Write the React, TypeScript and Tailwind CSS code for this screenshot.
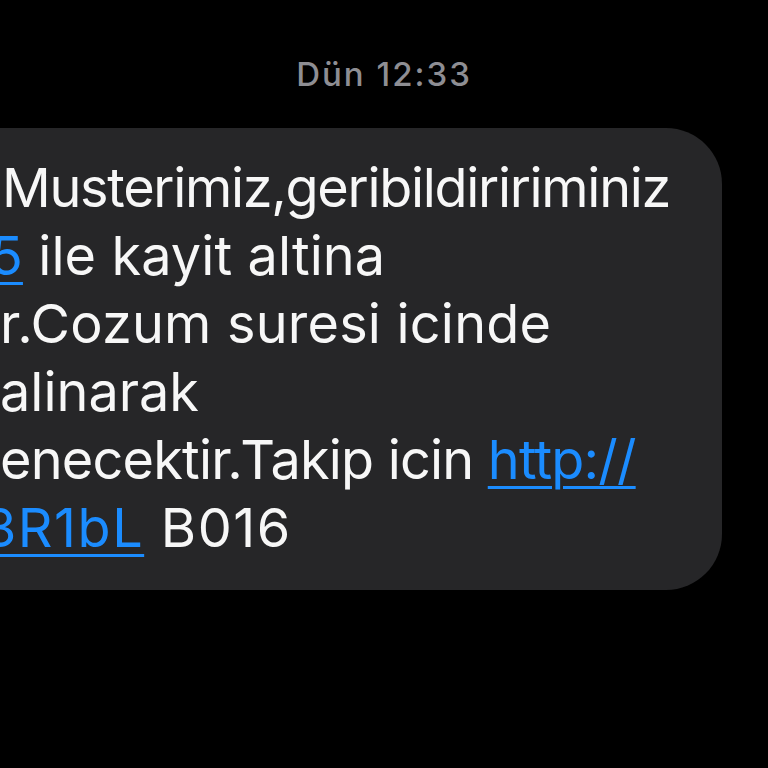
export default function App() {
  const link = "text-[#1b8cff] underline decoration-[3px] underline-offset-[7px]";
  return (
    <div className="h-screen w-full overflow-hidden bg-black font-['Inter','Liberation_Sans',sans-serif]">
      {/* timestamp */}
      <div className="pt-[54px] text-center text-[33px] leading-[40px] font-medium tracking-[2px] text-[#8e8e93]">
        Dün 12:33
      </div>

      {/* message bubble */}
      <div className="mt-[34px] flex">
        <div className="ml-[-60px] mr-[46px] flex-1 rounded-[56px] bg-[#262628] pb-[28px] pl-[60px] pt-[26px] text-[54px] leading-[68px] text-[#f7f7f7] whitespace-nowrap">
          <div className="ml-[2px] tracking-[-1.3px]">Musterimiz,geribildiririminiz</div>
          <div className="ml-[-10px] tracking-[0.1px]">
            <span className={link}>5</span> ile kayit altina
          </div>
          <div className="tracking-[0.2px]">r.Cozum suresi icinde</div>
          <div>alinarak</div>
          <div className="tracking-[-0.8px]">
            enecektir.Takip icin <span className={link}>http://</span>
          </div>
          <div className="ml-[-17px] tracking-[1.5px]">
            <span className={link}>3R1bL</span> B016
          </div>
        </div>
      </div>
    </div>
  );
}
